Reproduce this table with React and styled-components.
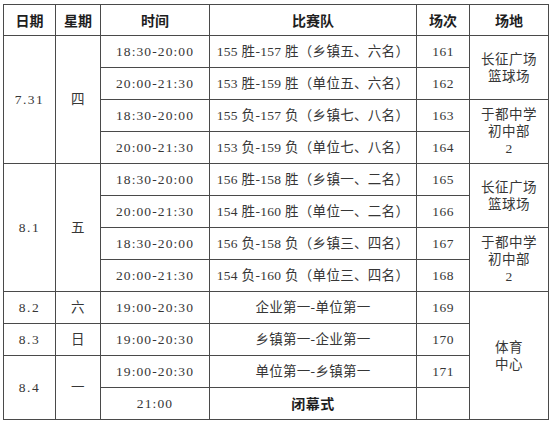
import React from "react";
import styled, { createGlobalStyle } from "styled-components";

const Global = createGlobalStyle`
  html, body { margin: 0; padding: 0; background: #fff; }
  body { font-family: "Liberation Serif", "Noto Sans CJK SC", serif; }
`;

const Page = styled.div`
  padding: 4px 0 0 3px;
`;

const Table = styled.table`
  border-collapse: collapse;
  table-layout: fixed;
  width: 545px;
  color: #363636;
`;

const Th = styled.th`
  border: 1px solid #4a4a4a;
  height: 30px;
  padding: 0;
  font-family: "Noto Sans CJK SC", sans-serif;
  font-weight: 700;
  font-size: 14px;
  color: #1e1e1e;
  text-align: center;
  vertical-align: middle;
`;

const Row = styled.tr`
  height: 32px;
`;

const Td = styled.td`
  border: 1px solid #4a4a4a;
  padding: 0;
  text-align: center;
  vertical-align: middle;
  font-family: "Liberation Serif", "Noto Sans CJK SC", serif;
  font-size: 13.5px;
  font-weight: 400;
  letter-spacing: ${(p) => p.$ls || "0.5px"};
  line-height: ${(p) => p.$lh || "18px"};
  white-space: nowrap;
`;

const Bold = styled.span`
  font-family: "Noto Sans CJK SC", sans-serif;
  font-weight: 700;
  font-size: 14px;
  color: #1e1e1e;
  letter-spacing: 0.5px;
`;

const Line = styled.div`
  display: block;
`;

const rows = [
  { date: "7.31", dSpan: 4, week: "四", time: "18:30-20:00", team: "155 胜-157 胜（乡镇五、六名）", num: "161", venue: ["长征广场", "篮球场"], vSpan: 2 },
  { time: "20:00-21:30", team: "153 胜-159 胜（单位五、六名）", num: "162" },
  { time: "18:30-20:00", team: "155 负-157 负（乡镇七、八名）", num: "163", venue: ["于都中学", "初中部", "2"], vSpan: 2 },
  { time: "20:00-21:30", team: "153 负-159 负（单位七、八名）", num: "164" },
  { date: "8.1", dSpan: 4, week: "五", time: "18:30-20:00", team: "156 胜-158 胜（乡镇一、二名）", num: "165", venue: ["长征广场", "篮球场"], vSpan: 2 },
  { time: "20:00-21:30", team: "154 胜-160 胜（单位一、二名）", num: "166" },
  { time: "18:30-20:00", team: "156 负-158 负（乡镇三、四名）", num: "167", venue: ["于都中学", "初中部", "2"], vSpan: 2 },
  { time: "20:00-21:30", team: "154 负-160 负（单位三、四名）", num: "168" },
  { date: "8.2", dSpan: 1, week: "六", time: "19:00-20:30", team: "企业第一-单位第一", num: "169", venue: ["体育", "中心"], vSpan: 4 },
  { date: "8.3", dSpan: 1, week: "日", time: "19:00-20:30", team: "乡镇第一-企业第一", num: "170" },
  { date: "8.4", dSpan: 2, week: "一", time: "19:00-20:30", team: "单位第一-乡镇第一", num: "171" },
  { time: "21:00", team: "闭幕式", bold: true, num: "" },
];

export default function App() {
  return (
    <>
      <Global />
      <Page>
        <Table>
          <colgroup>
            <col style={{ width: 52 }} />
            <col style={{ width: 45 }} />
            <col style={{ width: 109 }} />
            <col style={{ width: 207 }} />
            <col style={{ width: 53 }} />
            <col style={{ width: 79 }} />
          </colgroup>
          <thead>
            <tr>
              <Th>日期</Th>
              <Th>星期</Th>
              <Th>时间</Th>
              <Th>比赛队</Th>
              <Th>场次</Th>
              <Th>场地</Th>
            </tr>
          </thead>
          <tbody>
            {rows.map((r, i) => (
              <Row key={i}>
                {r.date && (
                  <Td rowSpan={r.dSpan} $ls="1.5px">
                    {r.date}
                  </Td>
                )}
                {r.week && <Td rowSpan={r.dSpan}>{r.week}</Td>}
                <Td $ls="1.1px">{r.time}</Td>
                <Td $ls="0.3px">{r.bold ? <Bold>{r.team}</Bold> : r.team}</Td>
                <Td>{r.num}</Td>
                {r.venue && (
                  <Td rowSpan={r.vSpan} $lh="17px">
                    {r.venue.map((v) => (
                      <Line key={v}>{v}</Line>
                    ))}
                  </Td>
                )}
              </Row>
            ))}
          </tbody>
        </Table>
      </Page>
    </>
  );
}
